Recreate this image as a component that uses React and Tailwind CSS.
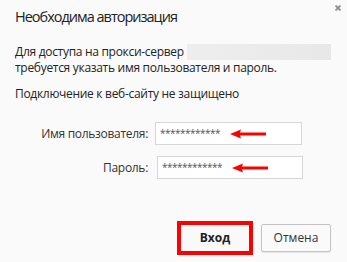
import React from 'react';

function Arrow() {
  return (
    <svg width="36" height="10" viewBox="0 0 36 10" className="shrink-0">
      <path d="M0 5 L11 0.5 L10 3.6 L36 3.4 L36 6.6 L10 6.4 L11 9.5 Z" fill="#ff0000" />
    </svg>
  );
}

export default function App() {
  return (
    <div
      className="relative w-[347px] h-[262px] bg-[#fafafa] text-[#222] overflow-hidden"
      style={{ fontFamily: '"Open Sans", "Noto Sans", sans-serif' }}
    >
      {/* close */}
      <svg className="absolute right-[6px] top-[5px]" width="6" height="6" viewBox="0 0 6 6">
        <path d="M0.5 0.5 L5.5 5.5 M5.5 0.5 L0.5 5.5" stroke="#8a8a8a" strokeWidth="1.7" />
      </svg>

      <div className="pl-[15px] pt-[7px]">
        <h1 className="text-[14.5px] leading-[20px] tracking-[-1px] text-[#222] font-normal">Необходима авторизация</h1>

        <div className="mt-[17px] text-[12px] leading-[16px] tracking-[-0.3px] text-[#222]">
          <div className="flex items-center">
            <span>Для доступа на прокси-сервер</span>
            <span className="ml-[3px] h-[16px] w-[144px] bg-gradient-to-r from-[#eeeeee] to-[#e8e8e8]" />
          </div>
          <div>требуется указать имя пользователя и пароль.</div>
        </div>

        <div className="mt-[10px] text-[12px] leading-[16px] tracking-[-0.3px] text-[#222]">
          Подключение к веб-сайту не защищено
        </div>
      </div>

      {/* form */}
      <div className="mt-[20px] grid grid-cols-[148px_auto] gap-y-[11px] items-center text-[12px] tracking-[-0.3px] text-[#333]">
        <div className="text-right">Имя пользователя:</div>
        <div className="ml-[7px] w-[147px] h-[23px] border border-[#d6d6d6] bg-white flex items-center pl-[4px]">
          <span className="text-[10px] tracking-[-0.5px] text-[#555] w-[70px]">************</span>
          <Arrow />
        </div>
        <div className="text-right">Пароль:</div>
        <div className="ml-[9px] w-[146px] h-[23px] border border-[#d6d6d6] bg-white flex items-center pl-[4px]">
          <span className="text-[10px] tracking-[-0.5px] text-[#555] w-[70px]">************</span>
          <Arrow />
        </div>
      </div>

      {/* buttons */}
      <div className="mt-[42px] flex justify-end items-center gap-[8px] pr-[16px]">
        <button className="w-[76px] h-[34px] border-[4px] border-[#ff0000] bg-[#f9f9f9] text-[12px] font-bold text-[#222] flex items-center justify-center">
          Вход
        </button>
        <button className="w-[70px] h-[28px] border border-[#c4c4c4] rounded-[2px] bg-[#fafafa] text-[12px] text-[#333] flex items-center justify-center shadow-[0_1px_1px_rgba(0,0,0,0.08)]">
          Отмена
        </button>
      </div>
    </div>
  );
}
